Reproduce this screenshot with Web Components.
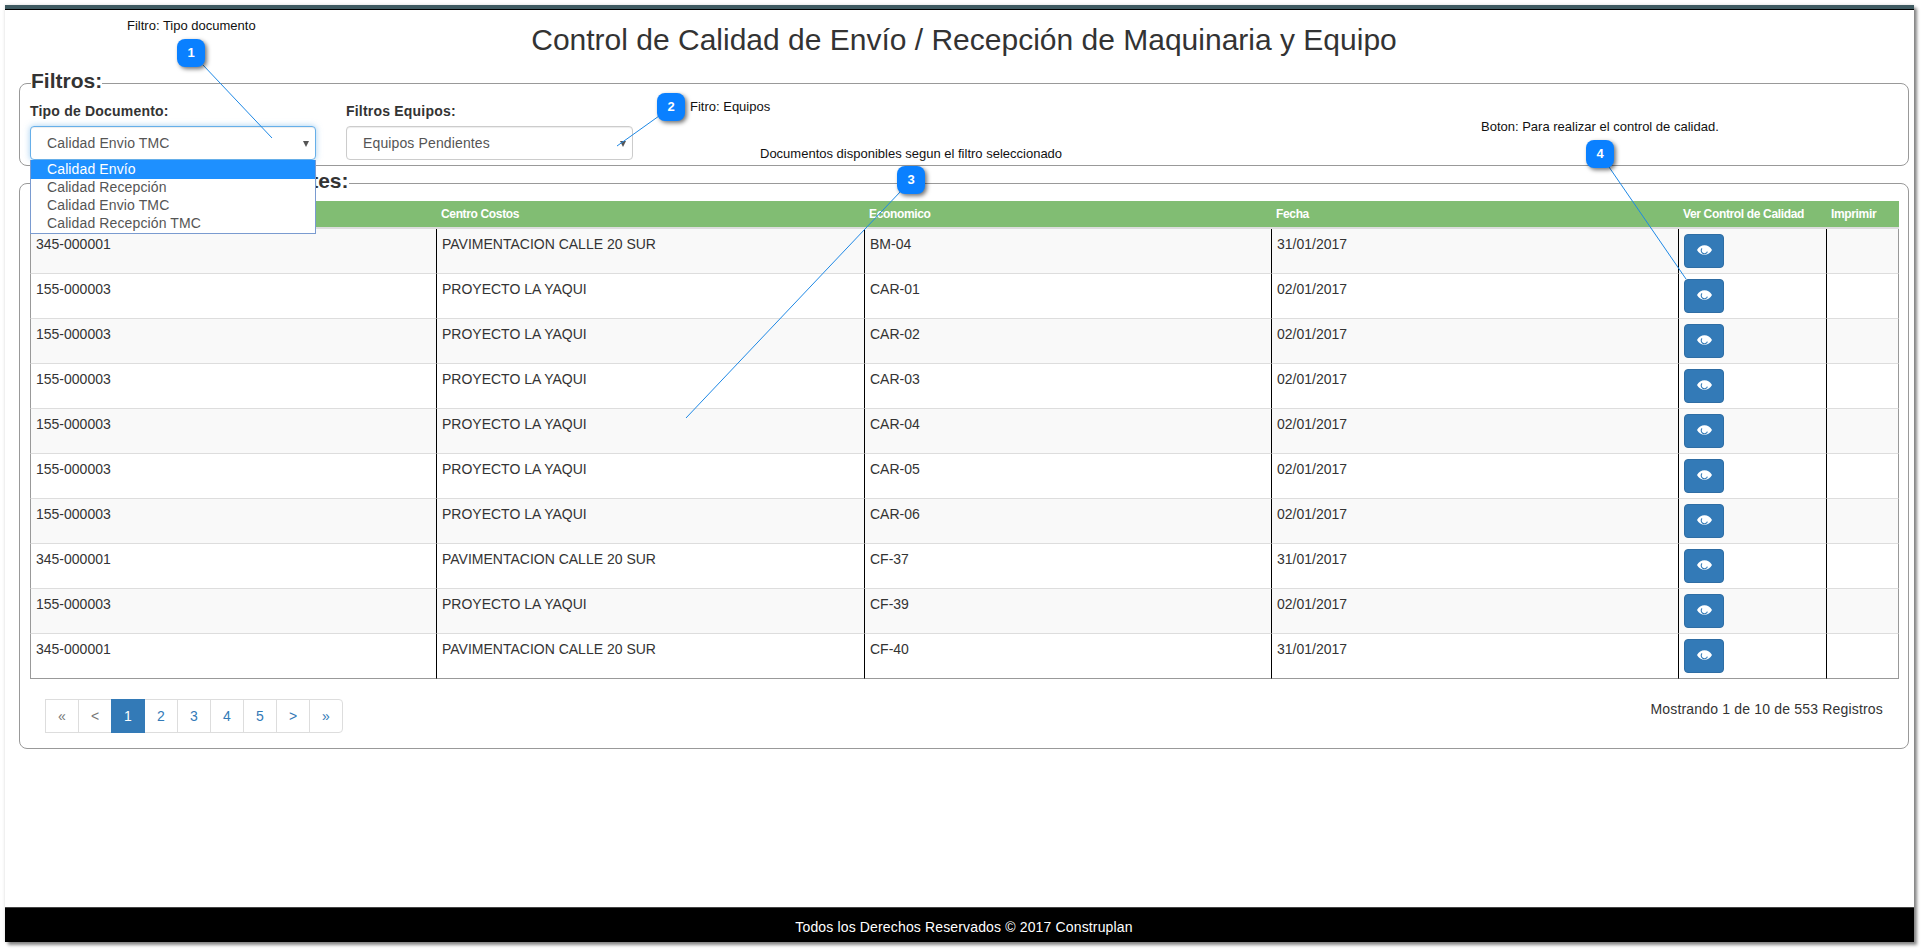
<!DOCTYPE html>
<html lang="es">
<head>
<meta charset="utf-8">
<title>Control de Calidad</title>
<style>
html,body{margin:0;padding:0;background:#fff;font-family:"Liberation Sans",Arial,sans-serif;font-size:14px;color:#333}
body{height:951px;overflow:hidden;position:relative;box-sizing:border-box;padding:5px 9px 0 5px}
</style>
</head>
<body>
<x-window>
  <x-title>Control de Calidad de Envío / Recepción de Maquinaria y Equipo</x-title>
  <x-panel legend="Filtros:">
    <x-filters>
      <x-field label="Tipo de Documento:" value="Calidad Envio TMC" focused>
        <x-listbox selected="0" options="Calidad Envío|Calidad Recepción|Calidad Envio TMC|Calidad Recepción TMC"></x-listbox>
      </x-field>
      <x-field class="wide" label="Filtros Equipos:" value="Equipos Pendientes"></x-field>
    </x-filters>
  </x-panel>
  <x-panel legend="Control de Calidad Pendientes:" class="second">
    <x-doc-table></x-doc-table>
    <x-table-foot>
      <x-pagination></x-pagination>
      <span>Mostrando 1 de 10 de 553 Registros</span>
    </x-table-foot>
  </x-panel>
  <x-footer>Todos los Derechos Reservados © 2017 Construplan</x-footer>
</x-window>
<x-annotations>
  <x-callout n="1" bx="177" by="39" text="Filtro: Tipo documento" lx="127" ly="18" line="203,65,272,138"></x-callout>
  <x-callout n="2" bx="657" by="93" text="Fitro: Equipos" lx="690" ly="99" line="659,116,617,146"></x-callout>
  <x-callout n="3" bx="897" by="166" text="Documentos disponibles segun el filtro seleccionado" lx="760" ly="146" line="901,191,686,418"></x-callout>
  <x-callout n="4" bx="1586" by="140" text="Boton: Para realizar el control de calidad." lx="1481" ly="119" line="1609,167,1686,279"></x-callout>
</x-annotations>
<script>
const def=(name,css,html,init)=>customElements.define(name,class extends HTMLElement{
  constructor(){super();this.attachShadow({mode:'open'});}
  connectedCallback(){
    const a=n=>this.getAttribute(n);
    this.shadowRoot.innerHTML='<style>'+css+'</style>'+(typeof html==='function'?html(a,this):html);
    if(init)init(this.shadowRoot,a,this);
  }
});
def('x-window',`:host{display:flex;flex-direction:column;width:1909px;height:937px;background:#fff;
  box-shadow:3px 3px 3px rgba(0,0,0,.45),0 0 3px rgba(0,0,0,.15);position:relative}
  .bar{height:4px;background:#3f5b62;border-bottom:1px solid #000;flex:none}
  .body{flex:1;display:flex;flex-direction:column;padding:0 5px 0 14px;min-height:0}`,
  `<div class="bar"></div><div class="body"><slot></slot></div>`);
def('x-title',`:host{display:block;margin:13px 0 15px;text-align:center;font-size:30px;line-height:33px;color:#333}`,`<slot></slot>`);
def('x-panel',`:host{display:block;margin-bottom:5px}
  fieldset{margin:0;border:1px solid #999;border-radius:8px;padding:6px 9px 5px 10px;min-width:0}
  legend{padding:0 0 4px;margin-left:1px;font-size:21px;font-weight:bold;line-height:20px;color:#333}
  :host(.second) legend{margin-left:7px}
  :host(.second) fieldset{padding-bottom:15px}`,
  a=>`<fieldset><legend>${a('legend')}</legend><slot></slot></fieldset>`);
def('x-filters',`:host{display:flex;gap:30px}`,`<slot></slot>`);
def('x-field',`:host{display:block;width:286px;position:relative}
  :host(.wide){width:287px}
  label{display:block;font-weight:bold;font-size:14px;line-height:20px;margin-bottom:5px;letter-spacing:.2px;color:#333}
  .box{box-sizing:border-box;height:34px;border:1px solid #ccc;border-radius:4px;padding:6px 16px;line-height:20px;color:#555;background:#fff;position:relative;letter-spacing:.13px;box-shadow:inset 0 1px 1px rgba(0,0,0,.075)}
  :host([focused]) .box{border-color:#66afe9;box-shadow:inset 0 1px 1px rgba(0,0,0,.075),0 0 6px rgba(102,175,233,.6)}
  .caret{position:absolute;right:6px;top:14px;width:0;height:0;border-left:3.5px solid transparent;border-right:3.5px solid transparent;border-top:6px solid #555}`,
  a=>`<label>${a('label')}</label><div class="box">${a('value')}<span class="caret"></span></div><slot></slot>`);
def('x-listbox',`:host{display:block;position:absolute;left:0;top:59px;width:286px;box-sizing:border-box;background:#fff;border:1px solid #7a9bd0;border-top:0;z-index:5;padding-bottom:1px}
  div{height:18px;line-height:18px;padding-left:16px;color:#555;letter-spacing:.12px;position:relative}
  div.sel{background:#1e90ff;color:#fff;height:19px;margin-bottom:-1px}`,
  a=>a('options').split('|').map((o,i)=>`<div class="${i==+a('selected')?'sel':''}">${o}</div>`).join(''));
def('x-eye-button',`:host{display:block;width:40px;height:34px;background:#337ab7;border:1px solid #2e6da4;border-radius:4px;box-sizing:border-box;position:relative}
  svg{position:absolute;left:11.5px;top:10px}`,
  `<svg width="15" height="10" viewBox="0 0 15 10"><path d="M0 5C3 -1.4 12 -1.4 15 5C12 11.4 3 11.4 0 5Z" fill="#fff"/><path d="M5 3.4a3.2 3.2 0 1 0 5.4 3.2" fill="none" stroke="#337ab7" stroke-width="1.1"/></svg>`);
const ROWS=[['345-000001','PAVIMENTACION CALLE 20 SUR','BM-04','31/01/2017'],['155-000003','PROYECTO LA YAQUI','CAR-01','02/01/2017'],['155-000003','PROYECTO LA YAQUI','CAR-02','02/01/2017'],['155-000003','PROYECTO LA YAQUI','CAR-03','02/01/2017'],['155-000003','PROYECTO LA YAQUI','CAR-04','02/01/2017'],['155-000003','PROYECTO LA YAQUI','CAR-05','02/01/2017'],['155-000003','PROYECTO LA YAQUI','CAR-06','02/01/2017'],['345-000001','PAVIMENTACION CALLE 20 SUR','CF-37','31/01/2017'],['155-000003','PROYECTO LA YAQUI','CF-39','02/01/2017'],['345-000001','PAVIMENTACION CALLE 20 SUR','CF-40','31/01/2017']];
def('x-doc-table',`:host{display:block}
  table{border-collapse:separate;border-spacing:0;table-layout:fixed;width:1869px;font-size:14px;color:#333}
  th{background:#81bd73;color:#fff;font-size:12px;font-weight:bold;line-height:16px;padding:5px;text-align:left;border-bottom:2px solid #ddd;white-space:nowrap;letter-spacing:-.35px}
  td{padding:5px;line-height:20px;vertical-align:top;border-bottom:1px solid #ddd;border-left:1px solid #000}
  td:first-child{border-left:1px solid #999}
  td:last-child{border-right:1px solid #999}
  tr:nth-child(odd) td{background:#f9f9f9}
  tr:last-child td{border-bottom:1px solid #999}`,
  `<table><colgroup><col style="width:406px"><col style="width:428px"><col style="width:407px"><col style="width:407px"><col style="width:148px"><col style="width:73px"></colgroup>
  <thead><tr><th></th><th>Centro Costos</th><th>Economico</th><th>Fecha</th><th>Ver Control de Calidad</th><th>Imprimir</th></tr></thead>
  <tbody>${ROWS.map(r=>`<tr>${r.map(c=>`<td>${c}</td>`).join('')}<td><x-eye-button></x-eye-button></td><td></td></tr>`).join('')}</tbody></table>`);
def('x-table-foot',`:host{display:flex;justify-content:space-between;align-items:flex-start;margin-top:20px;padding:0 16px;line-height:20px;color:#333;letter-spacing:.18px}`,`<slot></slot>`);
def('x-pagination',`:host{display:flex;font-size:14px;line-height:20px;letter-spacing:0}
  a{box-sizing:border-box;width:34px;height:34px;padding:6px 0;text-align:center;border:1px solid #ddd;margin-left:-1px;color:#337ab7;background:#fff;text-decoration:none}
  a:first-child{margin-left:0;border-radius:4px 0 0 4px}
  a:last-child{border-radius:0 4px 4px 0}
  a.m{color:#777}
  a.on{background:#337ab7;border-color:#337ab7;color:#fff;position:relative}`,
  `<a class="m">«</a><a class="m">&lt;</a><a class="on">1</a><a>2</a><a>3</a><a>4</a><a>5</a><a>&gt;</a><a>»</a>`);
def('x-footer',`:host{display:block;margin:auto -5px 0 -14px;height:35px;box-sizing:border-box;background:#000;border-top:1px solid #444;color:#fff;text-align:center;padding:9px 0 0 9px;line-height:20px;font-size:14px;letter-spacing:.15px}`,`<slot></slot>`);
def('x-annotations',`:host{display:block;position:absolute;left:0;top:0;width:1923px;height:951px;pointer-events:none;z-index:10}`,`<slot></slot>`);
def('x-callout',`:host{display:contents}
  svg{position:absolute;left:0;top:0;overflow:visible}
  .b{position:absolute;width:28px;height:28px;border-radius:8px;background:#0a80ff;color:#fff;font-weight:bold;font-size:13px;line-height:28px;text-align:center;box-shadow:2px 2px 4px rgba(0,0,0,.55)}
  .t{position:absolute;font-size:13px;line-height:16px;color:#111;white-space:nowrap}`,
  a=>{const [x1,y1,x2,y2]=a('line').split(',');return `<svg width="1923" height="951"><line x1="${x1}" y1="${y1}" x2="${x2}" y2="${y2}" stroke="#1e88e5" stroke-width="1"/></svg>
  <div class="t" style="left:${a('lx')}px;top:${a('ly')}px">${a('text')}</div>
  <div class="b" style="left:${a('bx')}px;top:${a('by')}px">${a('n')}</div>`});
</script>
</body>
</html>
